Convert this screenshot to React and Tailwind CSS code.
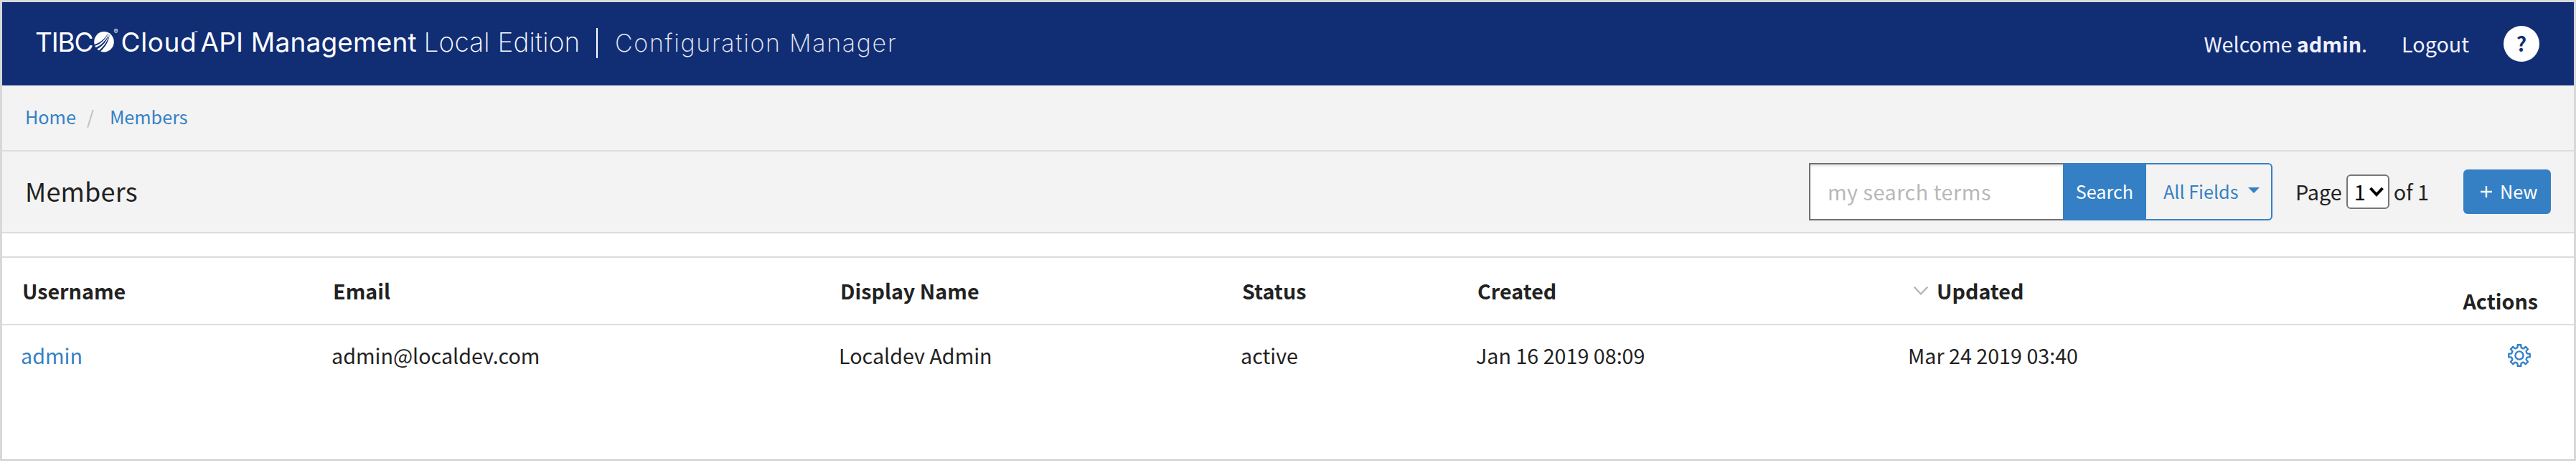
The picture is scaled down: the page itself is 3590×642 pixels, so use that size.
const rows = [
  {
    username: "admin",
    email: "admin@localdev.com",
    displayName: "Localdev Admin",
    status: "active",
    created: "Jan 16 2019 08:09",
    updated: "Mar 24 2019 03:40",
  },
];

const columns =
  "grid grid-cols-[433px_707px_560px_328px_602px_1fr_auto] pl-[26px]";

function gearPath() {
  const at = (deg, r) => {
    const t = (deg * Math.PI) / 180;
    return `${(16 + r * Math.sin(t)).toFixed(2)} ${(16 - r * Math.cos(t)).toFixed(2)}`;
  };
  let d = `M${at(-9, 14.9)}`;
  for (let i = 0; i < 8; i++) {
    const a = i * 45;
    d += `L${at(a + 9, 14.9)}L${at(a + 11, 12.4)}Q${at(a + 12, 11.4)} ${at(a + 17, 11)}`;
    d += `L${at(a + 28, 11)}Q${at(a + 33, 11.4)} ${at(a + 34, 12.4)}L${at(a + 36, 14.9)}`;
  }
  return d + "Z";
}

function GearIcon() {
  return (
    <svg viewBox="0 0 32 32" className="size-8 fill-none stroke-[#3580c4]" strokeWidth="2.4" strokeLinejoin="round">
      <path d={gearPath()} />
      <circle cx="16" cy="16" r="5.6" />
    </svg>
  );
}

function LogoBall() {
  return (
    <svg viewBox="0 0 28 29" className="h-[29px] w-7">
      <ellipse cx="14" cy="14.3" rx="13.8" ry="14.2" fill="#fff" />
      <g fill="#112e75">
        <path d="M0 18.2C9 15.8 15.5 9.5 20 1.8C16.500 10.500 9.5 17.5 0.300 20.300Z" />
        <path d="M0.800 23C11 19 17 12 21 2.500C18.500 13 12 21 2 25.500Z" />
        <path d="M5 27.800C13 22 18.500 14.500 21.900 3.500C20.500 14.500 15 22.500 7.500 29Z" />
      </g>
    </svg>
  );
}

function Header() {
  return (
    <header className="flex h-[116px] items-center bg-[#112e75] pr-12 pl-[46px] text-white">
      <div className="flex items-baseline pb-[3px] font-['Inter',sans-serif] text-[37px] leading-[44px] whitespace-nowrap">
        <span className="w-[81.500px] font-[370] tracking-[-1.2px]">TIBC</span>
        <span className="relative top-px">
          <LogoBall />
        </span>
        <span className="w-[9px] self-start text-[9px] leading-[14px]">®</span>
        <span className="w-[103px] pl-px font-[370] tracking-[0.6px]">Cloud</span>
        <span className="w-[9px] self-start text-[8px] leading-[18px]">™</span>
        <span className="w-[311px] font-[370] tracking-[0.2px]">API Management</span>
        <span className="w-[240.500px] font-extralight tracking-[0.2px]">Local Edition</span>
        <span className="h-[42px] w-[2px] self-center bg-white" />
        <span className="pl-[24px] text-[34px] font-extralight tracking-[1.7px] text-white/90">Configuration Manager</span>
      </div>
      <div className="ml-auto flex items-center gap-[48px] text-[28.700px] text-[#f0f0ff]">
        <span className="pb-px">
          Welcome <b>admin</b>.
        </span>
        <span className="pb-px">Logout</span>
        <span className="flex size-[50px] items-center justify-center rounded-full bg-white pb-[2px] text-[28px] font-bold text-[#112e75]">
          ?
        </span>
      </div>
    </header>
  );
}

function Breadcrumb() {
  return (
    <nav className="flex h-[92px] items-center border-b-2 border-[#ddd] pb-[4px] pl-[32px] text-[25.200px] text-[#3580c4]">
      <a>Home</a>
      <span className="w-[47px] pl-[15px] text-[#bbb]">/</span>
      <a>Members</a>
    </nav>
  );
}

function Toolbar() {
  return (
    <div className="flex h-[114px] items-center border-b-2 border-[#ddd] pr-8 pl-[32px]">
      <h1 className="pb-[4px] text-[36px] tracking-[0.2px]">Members</h1>
      <div className="ml-auto flex h-20">
        <div className="flex w-[354px] items-center border-2 border-r-0 border-[#707070] bg-white pl-[24px] text-[28.800px] tracking-[0.5px] text-[#b8b8b8] shadow-[inset_0_3px_3px_rgba(0,0,0,0.08)]">
          my search terms
        </div>
        <div className="flex w-[116px] items-center justify-center bg-[#3580c4] pb-[2px] text-[25.200px] text-white">
          Search
        </div>
        <div className="flex w-[176px] items-center rounded-r-md border-2 border-l-0 border-[#3580c4] pb-[2px] pl-6 text-[25.200px] text-[#3580c4]">
          All Fields
          <svg viewBox="0 0 16 8" className="mb-[3px] ml-[13px] h-2 w-4">
            <path d="M0 0H16L8 8Z" fill="#3580c4" />
          </svg>
        </div>
      </div>
      <div className="ml-8 flex items-center text-[28.800px]">
        <span>Page</span>
        <span className="mx-[6px] flex h-12 w-[60px] items-center rounded-md border-2 border-[#767676] bg-white pl-[9px] text-black">
          1
          <svg viewBox="0 0 20 14" className="ml-[5px] h-[14px] w-5 fill-none stroke-black" strokeWidth="4">
            <path d="M1.500 2L10 11L18.500 2" />
          </svg>
        </span>
        <span>of 1</span>
      </div>
      <button className="ml-[48px] flex h-[62px] w-[122px] items-center rounded-md bg-[#3580c4] pl-6 text-[25.200px] text-white">
        <svg viewBox="0 0 16 16" className="mb-px size-4 stroke-white" strokeWidth="2.4">
          <path d="M8 0V16M0 8H16" />
        </svg>
        <span className="ml-[11px] pb-[2px]">New</span>
      </button>
    </div>
  );
}

function MembersTable() {
  return (
    <div className="mt-8 border-t-2 border-[#ddd] text-[28.700px]">
      <div className={`${columns} h-[94px] items-center border-b-2 border-[#ddd] pr-[50px] font-bold [&>*]:pl-[2px]`}>
        <span>Username</span>
        <span>Email</span>
        <span>Display Name</span>
        <span>Status</span>
        <span>Created</span>
        <span className="flex items-center">
          <svg viewBox="0 0 20 12" className="mr-3 ml-[6px] h-3 w-5 fill-none stroke-[#b5b5b5]" strokeWidth="2.4" strokeLinecap="round" strokeLinejoin="round">
            <path d="M1.300 1.300L10 10.500L18.700 1.300" />
          </svg>
          Updated
        </span>
        <span className="pt-7">Actions</span>
      </div>
      {rows.map((row) => (
        <div key={row.username} className={`${columns} h-[84px] items-center pr-[60px]`}>
          <a className="text-[#3580c4]">{row.username}</a>
          <span>{row.email}</span>
          <span>{row.displayName}</span>
          <span>{row.status}</span>
          <span>{row.created}</span>
          <span>{row.updated}</span>
          <GearIcon />
        </div>
      ))}
    </div>
  );
}

export default function App() {
  return (
    <div className="h-[642px] w-[3590px] overflow-hidden border-[3px] border-[#d8d8d8] bg-white font-['Noto_Sans_CJK_SC',sans-serif] leading-[42px] text-[#222]">
      <Header />
      <div className="bg-[#f3f3f3]">
        <Breadcrumb />
        <Toolbar />
      </div>
      <MembersTable />
    </div>
  );
}
